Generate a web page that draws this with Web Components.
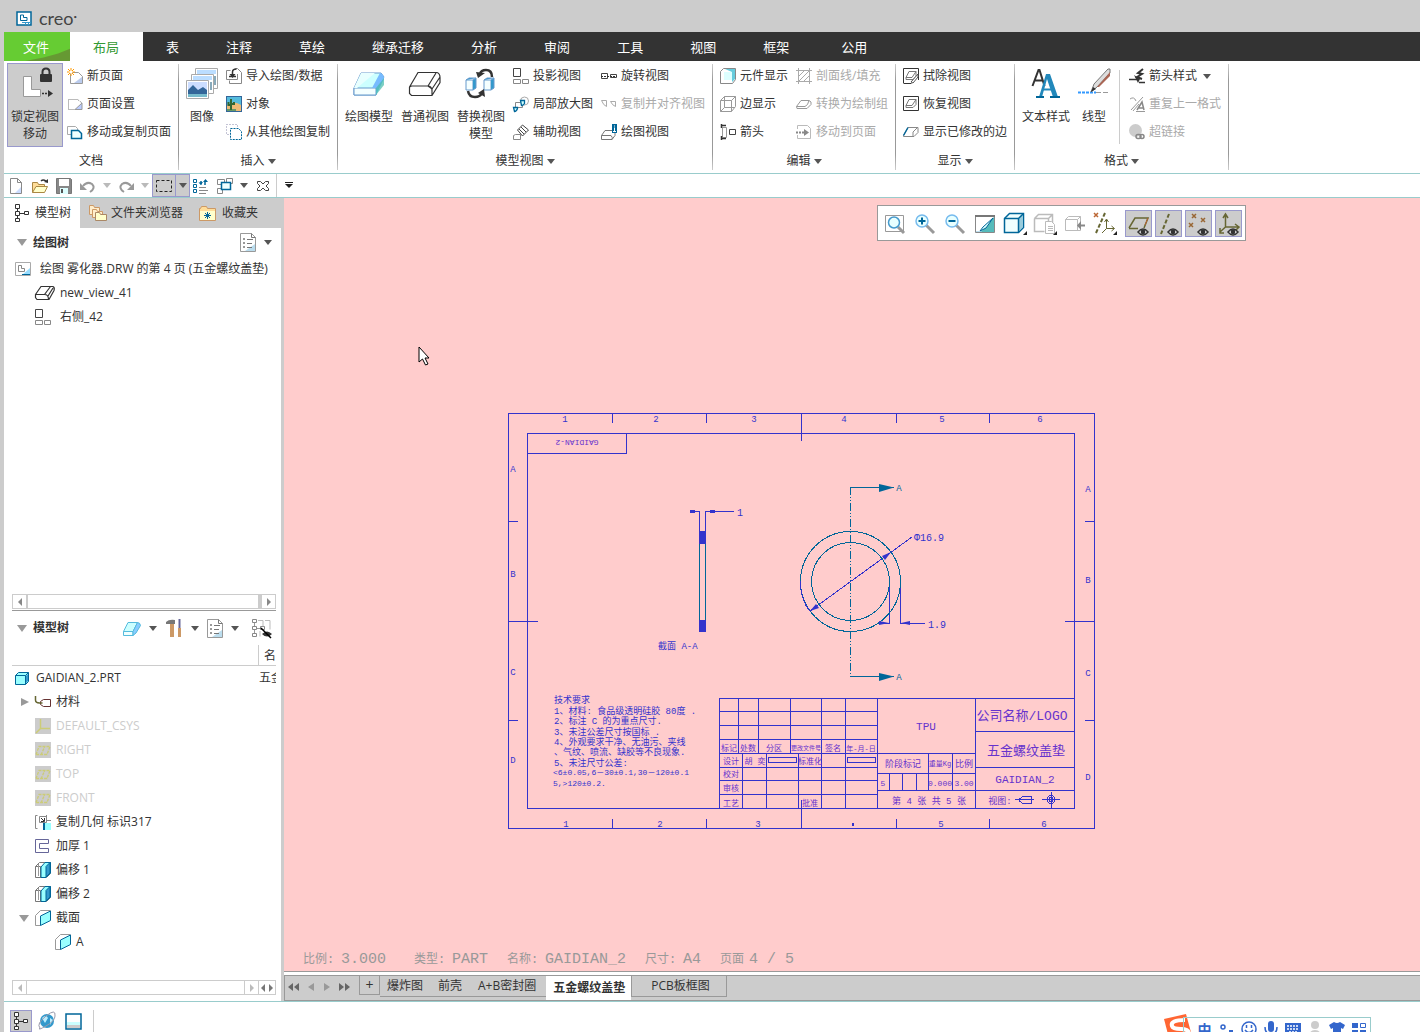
<!DOCTYPE html>
<html lang="zh-CN">
<head>
<meta charset="utf-8">
<title>creo</title>
<style>
  html, body { height: 100%; margin: 0; }
  body {
    background: #ccc;
    color: #333;
    font: 12px/16px "Open Sans", "Noto Sans CJK SC", sans-serif;
    overflow: hidden;
  }
</style>
</head>
<body>
<creo-app></creo-app>

<script>
const caret = '<path d="M0 0h8l-4 5z" fill="#555"/>';
const eye = '<path d="M10 20q5-6 10 0q-5 6-10 0z" fill="#fff" stroke="#333" stroke-width="1.5"/><circle cx="15" cy="20" r="2.4" fill="#333"/>';
const plane = '<path d="M0 0h16v16H0z" fill="#ccc"/><path d="M1 12.500L4 4.500h11l-3 8zM6 13l4-9" fill="none" stroke="#cc7" stroke-width="1.300" stroke-dasharray="3 1"/>';
const offset = '<path d="M.5 4.5l4-4h11v11l-4 4H.5zM.5 4.5h5v11" fill="#fff" stroke="#777"/><path d="M6 5l4-4.500h5.500V11L11 15.500H6z" fill="#9ff" stroke="#069"/><path d="M11 4.500l4-4V11l-4 4z" fill="#39c" stroke="#069"/><path d="M3.500 2v12" stroke="#999"/>';
const section = '<path d="M.5 5.500l5-5h10M.5 5.500v10h5" fill="none" stroke="#999"/><path d="M5.500 6L15.500 1v9.500l-10 5z" fill="#9ff" stroke="#069"/>';
const block = (a, b, c, s) => `<path d="M.5 11.500L5 2.500h9.500L10 11.500z" fill="${a}" stroke="${s}"/><path d="M.5 11.500v4H10v-4z" fill="${b}" stroke="${s}"/><path d="M10 11.500l4.500-9q2.500 0 3 3L13 13l-3 2.500z" fill="${c}" stroke="${s}"/>`;

// name: [width, height, markup]
const ICONS = {
  caret: [8, 5, caret],
  logo: [16, 15, '<path d="M1 1h14v13H1z" fill="#fff" stroke="#069" stroke-width="1.500"/><path d="M4.500 4v5.500h6.500v-3H7.500V4z" fill="none" stroke="#069"/><path d="M6 11.500h9M9.500 12v2m3-2v2" stroke="#39c"/>'],
  lock: [36, 32, '<path d="M6.500 8.500h8v13h9v7h-17z" fill="#fff" stroke="#999"/><rect x="23" y="6" width="12" height="8" rx="1" fill="#333"/><path d="M25.500 7V4q0-3.500 3.500-3.500T32.500 4v3" fill="none" stroke="#333" stroke-width="2"/><path d="M25 25.500h7" stroke="#333" stroke-width="1.500" stroke-dasharray="2 1"/><path d="M31 22l5 3.500-5 3.500z" fill="#333"/>'],
  pagenew: [16, 16, '<path d="M3.500 4.500h8l4 4v7h-12z" fill="#fff" stroke="#999"/><path d="M7 15l8-6v6z" fill="#bce"/><path d="M4 0v8M0 4h8M1 1l6 6M7 1L1 7" stroke="#f90"/><circle cx="4" cy="4" r="1.500" fill="#fff"/>'],
  pageset: [16, 16, '<path d="M1.500 3.500h9l4 3v7h-13z" fill="#fff" stroke="#777" stroke-dasharray="1 1"/><path d="M8 13.500h7V7z" fill="#bcf" stroke="#999"/>'],
  pagecopy: [16, 16, '<path d="M.5 2.500h8l2 2v6H.5z" fill="#fff" stroke="#aaa"/><path d="M4.500 6.500h7l3 3v5h-10z" fill="#eff" stroke="#069" stroke-width="1.500"/>'],
  images: [32, 32, '<g fill="#fff" stroke="#aaa"><path d="M9.500.5h22v20h-22z"/><path d="M5.500 6.500h22v19h-22z"/><path d="M.5 12.500h22v18H.5z"/></g><path d="M11 2h19v4H11zM7 8h19v4H7z" fill="#bdf"/><path d="M28 8h2v9h-2zM24 14h2v8h-2z" fill="#8ab"/><path d="M2 14h19v9H2z" fill="#cdf"/><path d="M2 22l5-5 5 5 5-3 4 3v5H2z" fill="#369"/><path d="M2 26h19v3H2z" fill="#7bc"/>'],
  import: [16, 16, '<path d="M.5 2.500h4m5-2h2l4 4v11h-12v-3M.5 2.500v9h11V6" fill="none" stroke="#888"/><path d="M3 8.500h7M6.500 9V4q0-3 4-3" fill="none" stroke="#333" stroke-width="1.500"/><path d="M3.500 6l3 4 3-4z" fill="#333"/>'],
  object: [16, 16, '<path d="M0 0h16v16H0z" fill="#369"/><path d="M1 1h14v8H1z" fill="#5bd"/><path d="M1 9q7-5 14 0v6H1z" fill="#eb7"/><path d="M1 13h9v2H1z" fill="#696"/><path d="M5 3v11M2.500 6v3H5m3-3v2H5" fill="none" stroke="#363" stroke-width="2"/>'],
  copyfrom: [16, 16, '<path d="M.5.5h11v10H.5z" fill="none" stroke="#88a" stroke-dasharray="1 2"/><path d="M4.500 4.500h8l3 3v8h-11z" fill="#fff" stroke="#069" stroke-dasharray="2 1"/>'],
  drawmodel: [34, 26, '<path d="M2 17L9 2h20l3 4-8 12v6H2z" fill="#cff" stroke="#69c"/><path d="M2 17h22v7H2z" fill="#f4ffff" stroke="#69c"/><path d="M9 2h14L5 17H2z" fill="#e8ffff"/><path d="M20 17L28 2q4 1 4 6l-8 16v-7z" fill="#7bf"/><path d="M24 17l8-10v7l-8 10z" fill="#4ba" opacity=".7"/>'],
  view: [34, 26, '<path d="M1.500 16L10 1.500h19q3 1 3 5v5L24 24.500H3.500l-2-2zM1.500 16l2-1H20l4 3 8-12M20 15L28 2m-4 16v6m-4-9q4 0 4 5" fill="#fff" stroke="#333" stroke-width="1.200"/>'],
  swap: [32, 32, '<path d="M1 12h7v10H1z" fill="#f5ffff" stroke="#69c"/><path d="M8 12l3-2v10l-3 2M1 12l3-2h7" fill="#39c" stroke="#69c"/><path d="M19 12h7v10h-7z" fill="#f5ffff" stroke="#69c"/><path d="M26 12l3-2v10l-3 2M19 12l3-2h7" fill="#39c" stroke="#69c"/><path d="M27 9q0-7-6-7-5 0-6 4M3 23q1 6 7 6 5 0 7-4" fill="none" stroke="#333" stroke-width="2.500"/><path d="M11 4l9 1-7 5zM20 29l-1-8-6 4z" fill="#333"/>'],
  project: [16, 16, '<path d="M.5.5h7v8h-7z" fill="#fff" stroke="#444"/><path d="M.5 11.500h7v4h-7zM9.500 11.500h6v4h-6z" fill="#fff" stroke="#888"/>'],
  detail: [16, 16, '<path d="M2.500 6.500h7v5h-7z" fill="#fff" stroke="#888"/><circle cx="11.500" cy="5" r="4" fill="none" stroke="#aaa"/><path d="M7.500 4.500h4v3q-1 2-3 2zM.5 11.500h4v1q-1 3-3 3z" fill="#cff" stroke="#069" stroke-width="1.300"/>'],
  aux: [16, 16, '<path d="M.5 11.500l2-1h5v5h-7z" fill="#fff" stroke="#888"/><path d="M4.500 6l5-5 6 5-6 6zM8 3l5 5M6 5l5 5" fill="#fff" stroke="#444"/>'],
  rotate: [16, 16, '<path d="M.5 5.500h6v5h-6zM9.500 6.500h6v3h-6z" fill="#fff" stroke="#444"/><path d="M0 8.500h16" stroke="#333" stroke-dasharray="2 1"/>'],
  align: [16, 16, '<path d="M.5 4.500h5v6q-3-1-5-6zM9.500 5.500h5v5q-3-1-5-5z" fill="none" stroke="#aaa"/>'],
  drawview: [16, 16, '<path d="M.5 11.500L4 6.500h10v5l-3 4H.5zM.5 11.500H10q2 2 1 4" fill="#fff" stroke="#777"/><path d="M11 0h5v9h-5z" fill="#069"/><path d="M13.500 1.500v1m0 1v4M12 7.500h3" stroke="#fff"/>'],
  comp: [16, 16, '<path d="M.5 3.500l3-3h12v11l-3 4H.5z" fill="#fff" stroke="#888"/><path d="M5 1h10v10l-3 3V4z" fill="#6cd"/><path d="M4 4h8v8H4z" fill="#dff"/>'],
  edge: [16, 16, '<path d="M.5 4.500l4-4h11v10l-4 5H.5zM11.500 15.500v-11H.5m11 0l4-4M4.500.5v11H15M4.500 11.500l-4 4" fill="none" stroke="#999"/>'],
  arrows: [16, 16, '<path d="M2.500 3.500h4v10h-4z" fill="#fff" stroke="#999"/><path d="M9.500 5.500h6v5h-6z" fill="#fff" stroke="#444"/><path d="M1 1.500h5M1 14.500h5M1.500 0v4m0 8v4" fill="none" stroke="#333" stroke-width="1.500"/>'],
  hatch: [16, 16, '<path d="M2.500 0v16m11-16v16M0 2.500h16m-16 11h16M3 8l5-5M3 13L13 3M8 13l5-5" fill="none" stroke="#aaa"/>'],
  group: [16, 16, '<path d="M.5 10.500L5 4.500h8q3 1 2 4l-4 4H1zM.5 10.500H9q3-1 4-6" fill="none" stroke="#999"/>'],
  moveto: [16, 16, '<path d="M1.500 5V1.500h10l3 3v10h-13V11" fill="none" stroke="#bbb"/><path d="M0 8.500h9" stroke="#888" stroke-width="2" stroke-dasharray="2 1"/><path d="M8 5l5 3.500L8 12z" fill="#888"/>'],
  erase: [16, 16, '<path d="M.5 15V.5h15V12M.5 15.500h8" fill="none" stroke="#333"/><path d="M3 9.500l3-6h7v5l-3 3H3zM3 9.500h6l4-6" fill="#fff" stroke="#777"/><path d="M8 14l7-8v3l-5 6z" fill="#fff" stroke="#555"/>'],
  restore: [16, 16, '<path d="M.5.5h15v14H.5z" fill="#fff" stroke="#333"/><path d="M3 9.500l3-6h7v5l-3 3H3zM3 9.500h6l4-6" fill="#fff" stroke="#777"/>'],
  modified: [16, 16, '<path d="M.5 11.500L5 3.500h10v5l-4 4H.5zM10 12V8l4-4" fill="#fff" stroke="#888"/><path d="M.5 11.500L5 3.500" stroke="#069" stroke-width="1.500"/>'],
  textstyle: [30, 32, '<path d="M1.500 18L7.500 2h1l5 16M4 12.500h8" fill="none" stroke="#333" stroke-width="2"/><path d="M15 6h4l8 23h-5l-6-18-5 18H8z" fill="#28b"/><path d="M11 21.500h10" stroke="#28b" stroke-width="2"/><path d="M5 29h8m6 0h10" stroke="#069" stroke-width="2"/>'],
  linestyle: [34, 32, '<path d="M1 24.500h18" stroke="#39f" stroke-width="2" stroke-dasharray="3 1"/><path d="M19 24.500h14" stroke="#999" stroke-dasharray="5 2"/><path d="M14 24l3-8L31 1h2v4L20 19z" fill="#ddd" stroke="#777"/><path d="M20 19L33 4v4L22 19z" fill="#a65"/><path d="M14 24l2-5 3 2z" fill="#333"/>'],
  arrowstyle: [16, 16, '<path d="M14 1L9 5l4 1-5 3 5 2" fill="none" stroke="#333" stroke-width="2"/><path d="M0 11.500h9M10 14.500h6" stroke="#333" stroke-width="1.500"/><path d="M5 7l6 4-2 4z" fill="#333"/>'],
  repeat: [16, 16, '<path d="M1 3q4-3 6 2M2 14L14 1M4 15L10 8M7 15.500h9" fill="none" stroke="#999"/><path d="M8 14l5-8 2 8M10 12h4" fill="none" stroke="#888" stroke-width="1.500"/>'],
  link: [16, 16, '<circle cx="6.500" cy="6.500" r="6.500" fill="#ccc"/><path d="M7 12.500q0-2 2-2h1q2 0 2 2t-2 2H9q-2 0-2-2zm4 0q0-2 2-2t2 2-2 2-2-2z" fill="none" stroke="#888" stroke-width="1.500"/>'],
  new: [14, 16, '<path d="M1.500.5h7l4 4v11h-11z" fill="#fff" stroke="#888"/><path d="M6 15l6-6v6z" fill="#cdf"/><path d="M8.500.5v4h4" fill="none" stroke="#888"/>'],
  open: [16, 16, '<path d="M.5 14.500v-10h5l1 2h6v3" fill="#fd9" stroke="#a84"/><path d="M.5 14.500L4 8.500h11.500l-3 6z" fill="#ffc" stroke="#a84"/><path d="M9 3q2-2 5 0" fill="none" stroke="#333" stroke-width="1.500"/><path d="M12 4l4-3v4z" fill="#333"/>'],
  save: [16, 16, '<path d="M.5.500h14l1 1v14H.5z" fill="#888" stroke="#777"/><path d="M3 1h10v7H3z" fill="#fff"/><path d="M4 10h8v6H4z" fill="#dff"/><path d="M5 11h2v4H5z" fill="#555"/>'],
  undo: [16, 14, '<path d="M3 7q4-5 9-2 4 4-2 8" fill="none" stroke="#999" stroke-width="2"/><path d="M0 4v7h7z" fill="#999"/>'],
  redo: [16, 14, '<path d="M13 7Q9 2 4 5q-4 4 2 8" fill="none" stroke="#999" stroke-width="2"/><path d="M16 4v7H9z" fill="#999"/>'],
  select: [16, 12, '<path d="M.5.500h15v11H.5z" fill="none" stroke="#222" stroke-dasharray="3 2"/>'],
  regen: [16, 16, '<path d="M.5 1.500h3v3h-3zM.5 6.500h3v3h-3zM.5 11.500h3v3h-3z" fill="#fff" stroke="#069"/><path d="M6 9.500h7m-7 3h9M6 15.500h7" stroke="#888"/><path d="M8 6.500V3m4 4V3" stroke="#069" stroke-width="1.500"/><path d="M5.500 4.500L8 7l2-3zM10 4l2.500-3L15 4z" fill="#069"/>'],
  windows: [16, 16, '<path d="M.5 1.500h7v5h-7zM9.500.5h6v5h-6zM.5 10.500h5v5h-5z" fill="#fff" stroke="#888"/><path d="M4.500 4.500h9v7h-9z" fill="#eff" stroke="#069" stroke-width="1.500"/>'],
  closewin: [14, 12, '<path d="M1.500 1.500h3L7 4l2.500-2.500h3v2L10 6l2.500 2.500v2h-3L7 8l-2.500 2.500h-3v-2L4 6 1.500 3.500z" fill="#fff" stroke="#444"/>'],
  more: [10, 7, '<path d="M1 0h8v1H1zM1 2h8l-4 4z" fill="#222"/>'],
  tree: [14, 18, '<path d="M.5.500h4v4h-4zM.5 7.500h4v4h-4zM.5 14.500h4v3h-4zM9.500 7.500h4v3h-4z" fill="#fff" stroke="#333"/><path d="M2.500 5v2m0 5v2M5 9.500h4" stroke="#333"/>'],
  folders: [20, 18, '<g fill="#fec" stroke="#c96"><path d="M1.500 10.500v-9h4l1 2h5v7z"/><path d="M4.500 13.500v-8h4l1 2h5v6z"/></g><path d="M7.500 16.500v-8h4l1 2h6v6z" fill="#ffc" stroke="#a86"/>'],
  fav: [18, 15, '<path d="M.5 14.500v-12h1l1-2h5l1 2h8v12z" fill="#fd9" stroke="#c96"/><path d="M1 5h15v9H1z" fill="#ffc"/><path d="M8.500 6v7M5 9.500h7M6 7l5 5m0-5l-5 5" stroke="#069"/>'],
  list: [16, 19, '<path d="M.5.500h11l4 4v14H.5z" fill="#fff" stroke="#999"/><path d="M5 18L15 11v7z" fill="#bde"/><path d="M11.500.5v4h4M7 6.500h6m-6 4h5m-5 4h5" fill="none" stroke="#777"/><path d="M3.500 5.500h1v1h-1zm0 4h1v1h-1zm0 4h1v1h-1z" fill="none" stroke="#777"/>'],
  drw: [16, 14, '<path d="M.5.500h15v13H.5z" fill="#fff" stroke="#aaa"/><path d="M7 13l8-7v7z" fill="#9df"/><path d="M3.500 3.500v6h6v-3h-3v-3z" fill="none" stroke="#888"/><path d="M7 12.500h8" stroke="#069"/>'],
  viewsm: [20, 16, '<path d="M.5 9.500L6 1.500h12q2 1 1 4l-5 9H2l-1.500-2zM.5 9.500h9q4 0 4 5M9.500 9.500l6-8M13 11l5-8" fill="#fff" stroke="#333" stroke-width="1.200"/>'],
  solid: [18, 16, block('#cff', '#efffff', '#8cf', '#5bd')],
  tools: [18, 18, '<path d="M1 3q3-3 9-2v4H1z" fill="#777"/><path d="M5 5h4v13H5z" fill="#c96"/><path d="M14.500 0v9" stroke="#669" stroke-width="2"/><path d="M13 9h3v9h-3z" fill="#c96"/>'],
  treehide: [20, 19, '<path d="M.5.500h4v3h-4zM.5 7.500h4v3h-4zM.5 14.500h4v3h-4zM8.500 7.500h4v3h-4z" fill="#fff" stroke="#888"/><path d="M2.500 4v3m0 4v3M5 9.500h3" stroke="#999"/><path d="M6 1.500h5v6m2-6h5v9M8 17.500V12" fill="none" stroke="#bbb"/><path d="M10 15q5-5 10 0-5 5-10 0z" fill="#333"/><path d="M9 9l10 10" stroke="#000" stroke-width="1.500"/>'],
  part: [14, 13, '<path d="M.5 3.500l3-3h10v9l-3 3H.5z" fill="#9ff" stroke="#069"/><path d="M10.500 3.500h-10m10 0v9m0-9l3-3" fill="none" stroke="#069"/><path d="M11 4l2-2v7l-2 2z" fill="#39c"/>'],
  material: [16, 12, '<path d="M5.500 5.500l3-2h7v7h-7l-3-2z" fill="#fff" stroke="#633"/><path d="M.5 0v4q0 3 4 3h3" fill="none" stroke="#663" stroke-width="1.500"/>'],
  csys: [16, 16, '<path d="M0 0h16v16H0z" fill="#ccc"/><path d="M5.500 1v9.500H15M5.500 10.500L1 15" fill="none" stroke="#cc7" stroke-width="1.500"/>'],
  plane: [16, 16, plane],
  copygeo: [16, 16, '<path d="M2.500 1.500H.5v13h2M4.500 2.500h7v6h-7z" fill="none" stroke="#888"/><path d="M8 9h8v7H8z" fill="#9ff"/><path d="M9 9v7" stroke="#069" stroke-width="2"/><path d="M6 4l3 3M9.500 4v3.500H6" fill="none" stroke="#333"/><path d="M11.500 1v5.500H16" fill="none" stroke="#888"/>'],
  thicken: [14, 14, '<path d="M13.500.5v4h-9v5h9v4H.5V.5z" fill="#fff" stroke="#669"/>'],
  offset: [16, 16, offset],
  section: [16, 16, section],
  zoomfit: [20, 20, '<path d="M.5 1.500h18v16H.5z" fill="#fff" stroke="#999"/><path d="M13 13l6 6" stroke="#999" stroke-width="3"/><circle cx="9" cy="8.500" r="5.500" fill="#e8ffff" stroke="#49c" stroke-width="1.500"/>'],
  zoomin: [20, 20, '<path d="M11 11l8 8" stroke="#999" stroke-width="3"/><circle cx="7" cy="7" r="6" fill="#e8ffff" stroke="#7be" stroke-width="1.500"/><path d="M7 3.500v7M3.500 7h7" stroke="#069" stroke-width="2"/>'],
  zoomout: [20, 20, '<path d="M11 11l8 8" stroke="#999" stroke-width="3"/><circle cx="7" cy="7" r="6" fill="#e8ffff" stroke="#7be" stroke-width="1.500"/><path d="M3.500 7h7" stroke="#069" stroke-width="2"/>'],
  repaint: [20, 20, '<path d="M.5 1.500h19v17H.5z" fill="#bde" stroke="#888"/><path d="M1 3h18L5 17H1z" fill="#fff"/><path d="M19 3v15H6z" fill="#5bb"/><path d="M18 4L8 13l-3 4 6-3z" fill="#dff" stroke="#069"/><path d="M0 2h20" stroke="#777" stroke-width="2"/>'],
  display: [24, 24, '<path d="M1.500 6.500l5-5h14v14l-5 5h-14z" fill="#f0ffff" stroke="#069" stroke-width="1.500"/><path d="M15 7l5-5v13l-5 5z" fill="#9cd"/><path d="M1.500 6.500h14v14m0-14l5-5" fill="none" stroke="#069" stroke-width="1.500"/><path d="M24 19v4h-4z" fill="#222"/>'],
  saved: [24, 24, '<path d="M1.500 6.500l4-4h14v9M1.500 6.500v13h10M1.500 6.500h14v4m0-4l4-4" fill="none" stroke="#bbb" stroke-width="1.500"/><path d="M12.500 9.500h6l3 3v9h-9z" fill="#fff" stroke="#bbb"/><path d="M15 14.500h5m-5 2h5m-5 2h5" stroke="#bbb"/><path d="M24 19v4h-4z" fill="#222"/>'],
  persp: [22, 20, '<path d="M1.500 5.500l3-3h12v14h-15zM1.500 5.500h12v11m0-11l3-3" fill="#fff" stroke="#bbb"/><path d="M15 11.500h6" stroke="#888" stroke-width="2"/><path d="M17 7v9l-4-4.500z" fill="#888"/>'],
  datum: [24, 24, '<path d="M1 1l4 4m0-4L1 5" stroke="#b63" stroke-width="1.500"/><path d="M12 1L3 21" stroke="#663" stroke-width="2" stroke-dasharray="4 2"/><path d="M13.500 8v8.500H21M13.500 16.500L9 21M11.500 10l2-3 2 3m3 4l3 2.500-3 2.500" fill="none" stroke="#663"/><path d="M24 19v4h-4z" fill="#222"/>'],
  dplane: [22, 24, '<path d="M1 16L7 6h13l-4 10" fill="none" stroke="#663" stroke-width="1.500"/><path d="M1 16.500h9" stroke="#663" stroke-width="1.500"/><path d="M20 6l-3 7" stroke="#b63"/>' + eye],
  daxis: [22, 24, '<path d="M11 2L3 22" stroke="#663" stroke-width="2" stroke-dasharray="4 2"/>' + eye],
  dpoint: [22, 24, '<path d="M4 2l4 4m0-4L4 6m9 0l4 4m0-4l-4 4M1 11l4 4m0-4l-4 4" stroke="#963" stroke-width="1.500"/>' + eye],
  dcsys: [22, 24, '<path d="M7.500 3v12H20M7.500 15L2 20M5 6l2.500-4L10 6m7 6l4 3-3 3M2 16v5h4" fill="none" stroke="#663" stroke-width="1.500"/>' + eye],
  globe: [18, 18, '<circle cx="9" cy="9" r="7" fill="#39c"/><path d="M4 6q4-4 6 0l-3 5zM12 6l3 2-3 5z" fill="#bef"/><path d="M2 16Q-2 12 8 4t9 0q0 5-9 10t-6 2z" fill="none" stroke="#99a"/>'],
  panel: [17, 17, '<path d="M1 1h15v15H1z" fill="#fff" stroke="#069" stroke-width="1.500"/><path d="M2 9h13v3H2z" fill="#cff"/><path d="M2 12h13v3H2z" fill="#ccc"/>'],
  cursor: [12, 20, '<path d="M1 1v15l3.500-3 3 6 2.500-1-3-6H11z" fill="#fff" stroke="#000"/>'],
  sogou: [28, 26, '<path d="M0 5L22 0l6 22-22 6z" fill="#f63"/><path d="M21 6Q6 6 8 12q1 3 9 3t8 5q-2 4-16 5" fill="none" stroke="#fff" stroke-width="4"/>'],
  dots: [14, 14, '<circle cx="3" cy="5" r="2" fill="none" stroke="#36c" stroke-width="1.500"/><path d="M9 8h4v3l-3 3v-3H9z" fill="#36c"/>'],
  smile: [16, 16, '<circle cx="8" cy="8" r="7" fill="#fff" stroke="#36c" stroke-width="1.500"/><path d="M5.500 4v3m5-3v3M4 9q4 5 8 0" fill="none" stroke="#36c" stroke-width="1.500"/>'],
  mic: [14, 16, '<rect x="4" y="0" width="6" height="11" rx="3" fill="#36c"/><path d="M1 6q0 7 6 7t6-7M7 13v3" fill="none" stroke="#36c" stroke-width="1.500"/>'],
  keyboard: [16, 14, '<path d="M0 1h16v12H0z" fill="#36c"/><path d="M2 4h12M2 7h12M4 10h8" stroke="#fff" stroke-width="1.500" stroke-dasharray="2 1"/>'],
  person: [14, 16, '<circle cx="7" cy="4" r="4" fill="#ccc"/><path d="M1 16q0-7 6-7t6 7z" fill="#ccc"/>'],
  shirt: [16, 14, '<path d="M0 3l5-3q3 2 6 0l5 3-2 4-2-1v8H4V6L2 7z" fill="#36c"/>'],
  apps: [14, 14, '<path d="M0 1h6v5H0zM0 8h6v5H0zM8 8h6v5H8z" fill="#36c"/><path d="M8.500 1.500h5v4h-5z" fill="#fff" stroke="#36c"/>']
};

class CreoIcon extends HTMLElement {
  connectedCallback() {
    const [w, h, markup] = ICONS[this.getAttribute('name')];
    this.attachShadow({ mode: 'open' }).innerHTML = `
      <style>
        :host { display: inline-flex; flex: none; }
        svg { display: block; overflow: visible; }
      </style>
      <svg width="${w}" height="${h}" viewBox="0 0 ${w} ${h}" aria-hidden="true">${markup}</svg>`;
  }
}
customElements.define('creo-icon', CreoIcon);

class CreoTitle extends HTMLElement {
  connectedCallback() {
    this.attachShadow({ mode: 'open' }).innerHTML = `
      <style>
        :host { display: flex; align-items: center; gap: 7px; height: 32px; padding: 4px 0 0 12px; box-sizing: border-box; }
        span { font: 18px/20px Lato, sans-serif; color: #444; }
        sup { font-size: 6px; line-height: 0; vertical-align: 6px; }
      </style>
      <creo-icon name="logo"></creo-icon><span>creo<sup>•</sup></span>`;
  }
}
customElements.define('creo-title', CreoTitle);

class RibbonTabs extends HTMLElement {
  connectedCallback() {
    const tabs = ['表', '注释', '草绘', '继承迁移', '分析', '审阅', '工具', '视图', '框架'];
    this.attachShadow({ mode: 'open' }).innerHTML = `
      <style>
        :host { display: block; background: #333; }
        nav { display: flex; }
        button { border: 0; background: none; color: #fff; font: inherit; font-size: 13px; line-height: 28px; padding: 1px 24px 0 23px; height: 29px; white-space: nowrap; }
        .file { position: relative; background: #6c3; padding: 1px 21px 0 19px; }
        .file::before { content: ""; position: absolute; inset: 0; background: #693; clip-path: polygon(32% 100%, 60% 88%, 82% 74%, 100% 58%, 100% 100%); }
        .file span { position: relative; }
        .active { background: #fff; color: #393; }
        .last { margin-left: 5px; }
      </style>
      <nav role="tablist">
        <button class="file"><span>文件</span></button>
        <button class="active" role="tab" aria-selected="true">布局</button>
        ${tabs.map(t => `<button role="tab">${t}</button>`).join('')}
        <button class="last" role="tab">公用</button>
      </nav>`;
  }
}
customElements.define('ribbon-tabs', RibbonTabs);

class RibbonButton extends HTMLElement {
  connectedCallback() {
    const extra = this.hasAttribute('caret') ? '<creo-icon class="caret" name="caret"></creo-icon>' : '';
    this.attachShadow({ mode: 'open' }).innerHTML = `
      <style>
        :host { display: block; }
        button { display: flex; align-items: center; gap: 4px; height: 28px; padding: 0 4px; border: 0; background: none; color: inherit; font: inherit; white-space: nowrap; box-sizing: border-box; }
        button:disabled { color: #aaa; }
        .box { display: flex; align-items: center; justify-content: center; width: 16px; flex: none; }
        .caret { margin-left: 2px; }
        :host([big]) { margin-top: 1px; }
        :host([big]) button { flex-direction: column; gap: 8px; height: 84px; padding: 4px 3px 0; border: 1px solid transparent; white-space: normal; }
        :host([big]) .box { width: 32px; height: 32px; }
        :host([big]) .text { max-width: 48px; line-height: 17px; }
        :host([pressed]) button { background: #ccc; border-color: #99c; }
      </style>
      <button ${this.hasAttribute('off') ? 'disabled' : ''}>
        <span class="box"><creo-icon name="${this.getAttribute('icon')}"></creo-icon></span>
        <span class="text"><slot></slot></span>${extra}
      </button>`;
  }
}
customElements.define('ribbon-button', RibbonButton);

class RibbonGroup extends HTMLElement {
  connectedCallback() {
    const drop = this.hasAttribute('drop') ? '<creo-icon name="caret"></creo-icon>' : '';
    this.attachShadow({ mode: 'open' }).innerHTML = `
      <style>
        :host { display: flex; flex-direction: column; flex: none; padding: 1px 4px 0 3px; background: linear-gradient(#ccc, #999 15%, #999 85%, #ccc) right center / 1px 106px no-repeat; }
        .body { display: flex; height: 86px; }
        .label { display: flex; align-items: center; justify-content: center; gap: 3px; height: 25px; border: 0; background: none; font: inherit; color: inherit; padding: 1px 0 0; }
        ::slotted(.rule) { width: 1px; height: 74px; margin: 8px 5px 0; background: #ccc; }
      </style>
      <div class="body"><slot></slot></div>
      <button class="label">${this.getAttribute('label')}${drop}</button>`;
  }
}
customElements.define('ribbon-group', RibbonGroup);

class RibbonBar extends HTMLElement {
  connectedCallback() {
    this.attachShadow({ mode: 'open' }).innerHTML = `
      <style>
        :host { display: flex; background: #fff; border-bottom: 1px solid #9cc; overflow: hidden; }
      </style>
      <ribbon-group label="文档">
        <ribbon-button big pressed icon="lock">锁定视图移动</ribbon-button>
        <div>
          <ribbon-button icon="pagenew">新页面</ribbon-button>
          <ribbon-button icon="pageset">页面设置</ribbon-button>
          <ribbon-button icon="pagecopy">移动或复制页面</ribbon-button>
        </div>
      </ribbon-group>
      <ribbon-group label="插入" drop>
        <ribbon-button big icon="images">图像</ribbon-button>
        <div>
          <ribbon-button icon="import">导入绘图/数据</ribbon-button>
          <ribbon-button icon="object">对象</ribbon-button>
          <ribbon-button icon="copyfrom">从其他绘图复制</ribbon-button>
        </div>
      </ribbon-group>
      <ribbon-group label="模型视图" drop>
        <ribbon-button big icon="drawmodel">绘图模型</ribbon-button>
        <ribbon-button big icon="view">普通视图</ribbon-button>
        <ribbon-button big icon="swap">替换视图模型</ribbon-button>
        <div>
          <ribbon-button icon="project">投影视图</ribbon-button>
          <ribbon-button icon="detail">局部放大图</ribbon-button>
          <ribbon-button icon="aux">辅助视图</ribbon-button>
        </div>
        <div>
          <ribbon-button icon="rotate">旋转视图</ribbon-button>
          <ribbon-button off icon="align">复制并对齐视图</ribbon-button>
          <ribbon-button icon="drawview">绘图视图</ribbon-button>
        </div>
      </ribbon-group>
      <ribbon-group label="编辑" drop>
        <div>
          <ribbon-button icon="comp">元件显示</ribbon-button>
          <ribbon-button icon="edge">边显示</ribbon-button>
          <ribbon-button icon="arrows">箭头</ribbon-button>
        </div>
        <div>
          <ribbon-button off icon="hatch">剖面线/填充</ribbon-button>
          <ribbon-button off icon="group">转换为绘制组</ribbon-button>
          <ribbon-button off icon="moveto">移动到页面</ribbon-button>
        </div>
      </ribbon-group>
      <ribbon-group label="显示" drop>
        <div>
          <ribbon-button icon="erase">拭除视图</ribbon-button>
          <ribbon-button icon="restore">恢复视图</ribbon-button>
          <ribbon-button icon="modified">显示已修改的边</ribbon-button>
        </div>
      </ribbon-group>
      <ribbon-group label="格式" drop>
        <ribbon-button big icon="textstyle">文本样式</ribbon-button>
        <ribbon-button big icon="linestyle">线型</ribbon-button>
        <div class="rule"></div>
        <div>
          <ribbon-button caret icon="arrowstyle">箭头样式</ribbon-button>
          <ribbon-button off icon="repeat">重复上一格式</ribbon-button>
          <ribbon-button off icon="link">超链接</ribbon-button>
        </div>
      </ribbon-group>`;
  }
}
customElements.define('ribbon-bar', RibbonBar);

class QuickBar extends HTMLElement {
  connectedCallback() {
    this.attachShadow({ mode: 'open' }).innerHTML = `
      <style>
        :host { display: flex; align-items: center; height: 23px; background: #fff; border-bottom: 1px solid #9cc; }
        button { display: flex; align-items: center; justify-content: center; width: 24px; height: 23px; flex: none; padding: 0; border: 0; background: none; }
        .drop { width: 14px; }
        .dim { opacity: .4; }
        .split { display: flex; background: #ccc; border: 1px solid #99c; box-sizing: border-box; height: 23px; }
        .split button { height: 21px; width: 22px; }
        .split .drop { width: 14px; border-left: 1px solid #99c; }
        .split + button { width: 22px; }
        .wide { width: 26px; }
        .wide + .drop { width: 12px; }
        hr { width: 1px; height: 23px; margin: 0; border: 0; background: #ccc; }
      </style>
      <button aria-label="新建"><creo-icon name="new"></creo-icon></button>
      <button aria-label="打开"><creo-icon name="open"></creo-icon></button>
      <button aria-label="保存"><creo-icon name="save"></creo-icon></button>
      <button aria-label="撤消"><creo-icon name="undo"></creo-icon></button>
      <button class="drop dim" aria-label="撤消列表"><creo-icon name="caret"></creo-icon></button>
      <button aria-label="重做"><creo-icon name="redo"></creo-icon></button>
      <button class="drop dim" aria-label="重做列表"><creo-icon name="caret"></creo-icon></button>
      <span class="split">
        <button aria-label="选择"><creo-icon name="select"></creo-icon></button>
        <button class="drop" aria-label="选择列表"><creo-icon name="caret"></creo-icon></button>
      </span>
      <button aria-label="重新生成"><creo-icon name="regen"></creo-icon></button>
      <button class="wide" aria-label="窗口"><creo-icon name="windows"></creo-icon></button>
      <button class="drop" aria-label="窗口列表"><creo-icon name="caret"></creo-icon></button>
      <button class="wide" aria-label="关闭"><creo-icon name="closewin"></creo-icon></button>
      <hr>
      <button aria-label="自定义"><creo-icon name="more"></creo-icon></button>`;
  }
}
customElements.define('quick-bar', QuickBar);

class TreeItem extends HTMLElement {
  connectedCallback() {
    const toggle = this.getAttribute('toggle');
    this.attachShadow({ mode: 'open' }).innerHTML = `
      <style>
        :host { display: flex; align-items: center; height: 24px; white-space: nowrap; }
        :host([level="1"]) { padding-left: 20px; }
        :host([level="2"]) { padding-left: 40px; }
        :host([hid]) { color: #ccc; }
        .box { position: relative; display: flex; align-items: center; width: 16px; }
        .name { margin-left: 5px; }
        :host([wide]) .name { margin-left: 9px; }
        i { position: absolute; left: -15px; border: 4px solid transparent; }
        .open { border: 5px solid transparent; border-top: 7px solid #999; border-bottom: 0; left: -16px; }
        .shut { border-left: 8px solid #999; border-right: 0; left: -14px; }
      </style>
      <span class="box">${toggle ? `<i class="${toggle}"></i>` : ''}<creo-icon name="${this.getAttribute('icon')}"></creo-icon></span>
      <span class="name"><slot></slot></span>`;
  }
}
customElements.define('tree-item', TreeItem);

class ScrollTrack extends HTMLElement {
  connectedCallback() {
    this.attachShadow({ mode: 'open' }).innerHTML = `
      <style>
        :host { display: flex; height: 15px; box-sizing: border-box; border: 1px solid #ccc; background: #fff; flex: none; }
        span { flex: 1; border: solid #ccc; border-width: 0 4px 0 2px; }
        :host([thin]) span { border-width: 0 1px; }
        svg { display: block; width: 13px; height: 13px; fill: #888; }
        :host([thin]) svg { fill: #bbb; }
        :host([thin]) .both { width: 16px; fill: #777; border-left: 1px solid #ccc; }
      </style>
      <svg viewBox="0 0 13 13"><path d="M9 3v8L5 7z"/></svg><span></span>
      <svg viewBox="0 0 13 13"><path d="M5 3v8l4-4z"/></svg>
      ${this.hasAttribute('thin') ? '<svg class="both" viewBox="0 0 16 13"><path d="M6 3v8L2 7zM10 3v8l4-4z"/></svg>' : ''}`;
  }
}
customElements.define('scroll-track', ScrollTrack);

class SidePanel extends HTMLElement {
  connectedCallback() {
    this.attachShadow({ mode: 'open' }).innerHTML = `
      <style>
        :host { display: flex; flex-direction: column; width: 277px; flex: none; margin-right: 3px; background: #fff; }
        button { display: flex; align-items: center; border: 0; background: none; padding: 0; font: inherit; color: inherit; white-space: nowrap; }
        .tabs { display: flex; height: 30px; background: #ccc; margin-right: -3px; flex: none; }
        .tabs button { gap: 3px; padding: 0 8px; }
        .tabs .active { background: #fff; padding: 0 9px 0 11px; gap: 6px; }
        .tabs .fav { gap: 5px; }
        section { display: flex; flex-direction: column; flex: 382 1 0; min-height: 0; padding: 0 5px 0 8px; }
        .model { flex: 391 1 0; }
        header { display: flex; align-items: center; height: 29px; flex: none; }
        .model header { height: 34px; border-top: 1px solid #999; }
        h2 { font: inherit; font-weight: bold; margin: 0 auto 0 6px; }
        i { border: 5px solid transparent; border-top: 7px solid #999; border-bottom: 0; margin-left: 5px; }
        .tools { display: flex; align-items: center; gap: 8px; padding-right: 4px; }
        .tools .end { margin-left: 5px; }
        .tree { flex: 1; min-height: 0; overflow: hidden; padding-left: 3px; }
        .cols { display: flex; justify-content: flex-end; height: 20px; border-bottom: 1px solid #ccc; flex: none; }
        .cols span { width: 12px; padding-left: 5px; border-left: 1px solid #ccc; line-height: 22px; white-space: nowrap; }
        .root { display: flex; justify-content: space-between; }
        .root span { width: 17px; overflow: hidden; white-space: nowrap; line-height: 24px; }
        .space { height: 6px; flex: none; }
        .draw .space { height: 1px; }
      </style>
      <div class="tabs" role="tablist">
        <button class="active" role="tab"><creo-icon name="tree"></creo-icon>模型树</button>
        <button role="tab"><creo-icon name="folders"></creo-icon><span>文件夹浏览器</span></button>
        <button class="fav" role="tab"><creo-icon name="fav"></creo-icon><span>收藏夹</span></button>
      </div>
      <section class="draw">
        <header><i></i><h2>绘图树</h2>
          <div class="tools">
            <button aria-label="设置"><creo-icon name="list"></creo-icon></button>
            <button aria-label="设置列表"><creo-icon name="caret"></creo-icon></button>
          </div>
        </header>
        <div class="tree">
          <tree-item wide icon="drw">绘图 雾化器.DRW 的第 4 页 (五金螺纹盖垫)</tree-item>
          <tree-item wide level="1" icon="viewsm">new_view_41</tree-item>
          <tree-item wide level="1" icon="project">右侧_42</tree-item>
        </div>
        <scroll-track></scroll-track>
        <div class="space"></div>
      </section>
      <section class="model">
        <header><i></i><h2>模型树</h2>
          <div class="tools">
            <button aria-label="显示"><creo-icon name="solid"></creo-icon></button>
            <button aria-label="显示列表"><creo-icon name="caret"></creo-icon></button>
            <button aria-label="工具"><creo-icon name="tools"></creo-icon></button>
            <button aria-label="工具列表"><creo-icon name="caret"></creo-icon></button>
            <button aria-label="设置"><creo-icon name="list"></creo-icon></button>
            <button aria-label="设置列表"><creo-icon name="caret"></creo-icon></button>
            <button class="end" aria-label="隐藏"><creo-icon name="treehide"></creo-icon></button>
          </div>
        </header>
        <div class="cols"><span>名</span></div>
        <div class="tree">
          <div class="root"><tree-item icon="part">GAIDIAN_2.PRT</tree-item><span>五金</span></div>
          <tree-item level="1" toggle="shut" icon="material">材料</tree-item>
          <tree-item level="1" hid icon="csys">DEFAULT_CSYS</tree-item>
          <tree-item level="1" hid icon="plane">RIGHT</tree-item>
          <tree-item level="1" hid icon="plane">TOP</tree-item>
          <tree-item level="1" hid icon="plane">FRONT</tree-item>
          <tree-item level="1" icon="copygeo">复制几何 标识317</tree-item>
          <tree-item level="1" icon="thicken">加厚 1</tree-item>
          <tree-item level="1" icon="offset">偏移 1</tree-item>
          <tree-item level="1" icon="offset">偏移 2</tree-item>
          <tree-item level="1" toggle="open" icon="section">截面</tree-item>
          <tree-item level="2" icon="section">A</tree-item>
        </div>
        <scroll-track thin></scroll-track>
        <div class="space"></div>
      </section>`;
  }
}
customElements.define('side-panel', SidePanel);

class ViewToolbar extends HTMLElement {
  connectedCallback() {
    const plain = { zoomfit: '重新调整', zoomin: '放大', zoomout: '缩小', repaint: '重画', display: '显示样式', saved: '已保存方向', persp: '视图管理器', datum: '基准显示过滤器' };
    const toggles = { dplane: '平面显示', daxis: '轴显示', dpoint: '点显示', dcsys: '坐标系显示' };
    this.attachShadow({ mode: 'open' }).innerHTML = `
      <style>
        :host { display: flex; gap: 3px; padding: 4px 3px 3px 3px; background: #fff; border: 1px solid #999; }
        button { display: flex; align-items: center; justify-content: center; width: 27px; height: 27px; padding: 0; border: 0; background: none; }
        .on { background: #ccc; border: 1px solid #99c; }
        hr { width: 1px; margin: 0; border: 0; }
      </style>
      ${Object.keys(plain).map(n => `<button aria-label="${plain[n]}"><creo-icon name="${n}"></creo-icon></button>`).join('')}
      <hr>
      ${Object.keys(toggles).map(n => `<button class="on" aria-pressed="true" aria-label="${toggles[n]}"><creo-icon name="${n}"></creo-icon></button>`).join('')}`;
  }
}
customElements.define('view-toolbar', ViewToolbar);

class DrawingSheet extends HTMLElement {
  connectedCallback() {
    const text = (x, y, size, str, cls = '') => `<text x="${x}" y="${y}" font-size="${size}" class="${cls}">${str}</text>`;
    const notes = [
      '技术要求', '1、材料: 食品级透明硅胶 80度 .', '2、标注 C 的为重点尺寸.', '3、未注公差尺寸按国标 .',
      '4、外观要求干净、无油污、夹线', '、气纹、喷流、缺胶等不良现象.', '5、未注尺寸公差:'
    ];
    this.attachShadow({ mode: 'open' }).innerHTML = `
      <style>
        :host { display: block; }
        svg { display: block; width: 100%; height: 100%; font-family: "Liberation Mono", "Noto Sans CJK SC", monospace; }
        .line { fill: none; stroke: #33c; shape-rendering: crispEdges; }
        .geo { fill: none; stroke: #069; shape-rendering: crispEdges; }
        text { fill: #33c; }
        .m { text-anchor: middle; }
        .c { text-anchor: middle; fill: #63c; }
        .g { text-anchor: middle; fill: #069; }
      </style>
      <svg viewBox="284 198 1136 773">
        <g class="line">
          <path d="M508.500 413.500h586v415h-586zM527.500 433.500h547v375h-547z"/>
          <path d="M527 453.500h99.500V433"/>
          <path d="M612.500 413v10m94-10v10m95-10v28m95-28v10m93-10v10M612.500 819v9m94-9v9m95-28v28m95-9v9m93-9v9"/>
          <path d="M508 521.500h10m-10 100h30m-30 99h10M1085 521.500h9m-29 100h29m-9 99h9"/>
          <!-- title block -->
          <path d="M719.500 808V698.500H1074M719 711.500h158m-158 14h158m-158 14h158m-158 14h256m-256 14h158m-158 13h158m-158 14h158"/>
          <path d="M738.500 698v55m20-55v55m32-55v55m31-55v110m24-110v110m32-110v110m98-110v110M742.500 753v55m24-55v55m32-55v55"/>
          <path d="M768.500 757.500h28v5h-28zM847.500 757.500h28v5h-28z"/>
          <path d="M877 773.500h98m-98 17h197M928.500 753v37m24-37v37M889.500 773v17m13-17v17m14-17v17M975 731.500h99m-99 36h99"/>
          <!-- dimensions -->
          <path d="M690 511.500h9.500v20M734 511.500h-28.500v20"/>
          <path d="M810 611L912 537M889.500 582v41.500H879M900.500 582v41.500h24.500"/>
          <path d="M1015 799.500h19m-15 0l4-3h8v7h-8l-4-3M1042 799.500h18m-9-8v16"/><circle cx="1051" cy="799.500" r="4"/><circle cx="1051" cy="799.500" r="2"/>
        </g>
        <g class="geo">
          <path d="M699.500 531v100M705.500 531v100M699 543.500h7"/>
          <circle cx="850.500" cy="581.500" r="50"/><circle cx="850.500" cy="581.500" r="39"/>
          <path d="M850.500 487v190" stroke-dasharray="8 2 1 2 1 2"/><path d="M851 487.500h43M851 676.500h43"/>
        </g>
        <path class="line" d="M800.500 581v5q1 14 9 25"/>
        <path d="M699 531h7v13h-7zM699 620h7v12h-7zM690 510h5v3h-5zM710 510h5v3h-5zM810 611l6-7 3 4zM891 552l-9 4 3 4zM889 623l-10-2v4zM901 623l9-2v4z" fill="#33c"/>
        <path d="M879 484v8l15-4.500zM879 673v8l15-4.500z" fill="#069"/>

        ${[565, 656, 754, 844, 942, 1040].map((x, i) => text(x, 422, 9, i + 1, 'm')).join('')}
        ${[566, 660, 758, 0, 941, 1044].map((x, i) => x ? text(x, 827, 9, i + 1, 'm') : '').join('')}
        <path d="M852 823h2v3h-2z" fill="#33c"/>
        ${[472, 577, 675, 763].map((y, i) => text(513, y, 9, 'ABCD'[i], 'm')).join('')}
        ${[492, 583, 676, 780].map((y, i) => text(1088, y, 9, 'ABCD'[i], 'm')).join('')}
        <text transform="rotate(180 577 443)" x="577" y="446" font-size="8" class="c">GAIDIAN-2</text>
        ${text(740, 516, 10, '1', 'm')}${text(658, 649, 9, '截面 A-A')}
        ${text(914, 541, 10, 'Φ16.9')}${text(928, 628, 10, '1.9')}
        ${text(899, 491, 9, 'A', 'g')}${text(899, 680, 9, 'A', 'g')}
        ${notes.map((s, i) => text(554, [703, 714, 724, 735, 745, 755, 766][i], 9, s)).join('')}
        ${text(553, 775, 8, '&lt;6±0.05,6－30±0.1,30－120±0.1')}${text(553, 786, 8, '5,&gt;120±0.2.')}
        ${text(729, 751, 8, '标记', 'c')}${text(748, 751, 8, '处数', 'c')}${text(774, 751, 8, '分区', 'c')}
        ${text(806, 750, 6, '更改文件号', 'c')}${text(833, 751, 8, '签名', 'c')}${text(861, 751, 7, '年-月-日', 'c')}
        ${text(731, 764, 8, '设计', 'c')}${text(755, 764, 8, '胡 奕', 'c')}${text(810, 764, 8, '标准化', 'c')}
        ${text(731, 777, 8, '校对', 'c')}${text(731, 791, 8, '审核', 'c')}${text(731, 806, 8, '工艺', 'c')}${text(810, 806, 8, '批准', 'c')}
        ${text(926, 730, 11, 'TPU', 'c')}
        ${text(903, 767, 9, '阶段标记', 'c')}${text(940, 766, 7, '重量Kg', 'c')}${text(964, 767, 9, '比例', 'c')}
        ${text(883, 786, 8, '5', 'c')}${text(940, 786, 8, '0.000', 'c')}${text(964, 786, 8, '3.00', 'c')}
        ${text(929, 804, 9, '第 4 张 共 5 张', 'c')}
        ${text(1022, 720, 13, '公司名称/LOGO', 'c')}${text(1026, 755, 13, '五金螺纹盖垫', 'c')}${text(1025, 783, 11, 'GAIDIAN_2', 'c')}
        ${text(1000, 804, 9, '视图:', 'c')}
      </svg>`;
  }
}
customElements.define('drawing-sheet', DrawingSheet);

class DrawingCanvas extends HTMLElement {
  connectedCallback() {
    this.attachShadow({ mode: 'open' }).innerHTML = `
      <style>
        :host { position: relative; display: flex; flex-direction: column; justify-content: flex-end; flex: 1; min-height: 0; background: #fcc; overflow: hidden; }
        drawing-sheet { position: absolute; inset: 0; }
        view-toolbar { position: absolute; top: 7px; left: 593px; }
        .pointer { position: absolute; left: 134px; top: 148px; }
        dl { display: flex; align-items: center; height: 22px; margin: 0 0 0 19px; color: #999; }
        dt { white-space: nowrap; width: 38px; font-family: "Liberation Mono", "Noto Sans CJK SC", monospace; }
        dd { margin: 0 19px 0 0; font: 15px/20px "Liberation Mono", monospace; white-space: nowrap; }
        .scale { margin-right: 28px; }
        .last { width: 29px; }
      </style>
      <drawing-sheet></drawing-sheet>
      <view-toolbar></view-toolbar>
      <creo-icon class="pointer" name="cursor"></creo-icon>
      <dl>
        <dt>比例:</dt><dd class="scale">3.000</dd>
        <dt>类型:</dt><dd>PART</dd>
        <dt>名称:</dt><dd>GAIDIAN_2</dd>
        <dt>尺寸:</dt><dd>A4</dd>
        <dt class="last">页面</dt><dd>4 / 5</dd>
      </dl>`;
  }
}
customElements.define('drawing-canvas', DrawingCanvas);

class SheetTabs extends HTMLElement {
  connectedCallback() {
    this.attachShadow({ mode: 'open' }).innerHTML = `
      <style>
        :host { display: block; border-top: 1px solid #999; padding-top: 3px; background: #fff; flex: none; }
        nav { display: flex; align-items: flex-start; height: 24px; background: #ccc; border: solid #999; border-width: 1px 0 1px 1px; }
        button { height: 21px; padding: 0 8px 0 7px; border: 0; border-bottom: 1px solid #999; background: none; font: inherit; color: inherit; line-height: 20px; white-space: nowrap; }
        .nav { width: 17px; padding: 0; border: 0; }
        .nav svg { display: block; margin: 0 auto; fill: #666; }
        .dim svg { fill: #999; }
        .add { width: 21px; padding: 0; margin-left: 6px; border: 1px solid #999; border-top: 0; height: 19px; line-height: 18px; font-size: 14px; }
        .wide { padding: 0 10px 0 8px; }
        .active { background: #fff; height: 24px; border: 0; font-weight: bold; padding: 0 6px 0 7px; }
        .last { padding: 0 16px 0 19px; border-right: 1px solid #999; border-left: 1px solid #999; }
      </style>
      <nav>
        <button class="nav" aria-label="第一页"><svg width="11" height="8"><path d="M5 0v8L0 4zM11 0v8L6 4z"/></svg></button>
        <button class="nav dim" aria-label="上一页"><svg width="7" height="8"><path d="M7 0v8L1 4z"/></svg></button>
        <button class="nav dim" aria-label="下一页"><svg width="7" height="8"><path d="M0 0v8l6-4z"/></svg></button>
        <button class="nav" aria-label="最后一页"><svg width="11" height="8"><path d="M0 0v8l5-4zM6 0v8l5-4z"/></svg></button>
        <button class="add" aria-label="新页面">+</button>
        <button>爆炸图</button><button>前壳</button><button class="wide">A+B密封圈</button>
        <button class="active" aria-current="page">五金螺纹盖垫</button>
        <button class="last">PCB板框图</button>
      </nav>`;
  }
}
customElements.define('sheet-tabs', SheetTabs);

class StatusBar extends HTMLElement {
  connectedCallback() {
    this.attachShadow({ mode: 'open' }).innerHTML = `
      <style>
        :host { display: flex; align-items: flex-start; justify-content: space-between; height: 30px; background: #fff; border-top: 1px solid #9cc; padding: 0 49px 0 6px; overflow: hidden; flex: none; }
        .views { display: flex; padding-top: 8px; height: 24px; }
        button { display: flex; align-items: center; justify-content: center; padding: 0; border: 0; background: none; width: 26px; height: 22px; box-sizing: border-box; }
        .on { width: 22px; background: #ccc; border: 1px solid #99c; margin-right: 2px; }
        hr { width: 1px; height: 24px; border: 0; margin: 0 0 0 7px; background: #ccc; }
        .ime { display: flex; align-items: flex-start; padding-top: 12px; }
        .ime .bar { display: flex; gap: 1px; height: 24px; margin: 3px 0 0 -9px; padding: 0 1px 0 10px; border: 1px solid #9cc; font: bold 14px/18px "Noto Sans CJK SC", sans-serif; color: #36c; }
        .bar button { width: 21px; }
        .bar .cn { font: inherit; color: inherit; }
      </style>
      <div class="views">
        <button class="on" aria-label="模型树"><creo-icon name="tree"></creo-icon></button>
        <button aria-label="浏览器"><creo-icon name="globe"></creo-icon></button>
        <button aria-label="全屏"><creo-icon name="panel"></creo-icon></button>
        <hr>
      </div>
      <div class="ime">
        <creo-icon name="sogou"></creo-icon>
        <div class="bar">
          <button class="cn">中</button>
          <button aria-label="标点"><creo-icon name="dots"></creo-icon></button>
          <button aria-label="表情"><creo-icon name="smile"></creo-icon></button>
          <button aria-label="语音"><creo-icon name="mic"></creo-icon></button>
          <button aria-label="键盘"><creo-icon name="keyboard"></creo-icon></button>
          <button aria-label="账户"><creo-icon name="person"></creo-icon></button>
          <button aria-label="皮肤"><creo-icon name="shirt"></creo-icon></button>
          <button aria-label="工具箱"><creo-icon name="apps"></creo-icon></button>
        </div>
      </div>`;
  }
}
customElements.define('status-bar', StatusBar);

class CreoApp extends HTMLElement {
  connectedCallback() {
    this.attachShadow({ mode: 'open' }).innerHTML = `
      <style>
        :host { display: flex; flex-direction: column; height: 100vh; padding-left: 4px; box-sizing: border-box; }
        main { display: flex; flex: 1; min-height: 0; }
        .work { display: flex; flex-direction: column; flex: 1; min-width: 0; }
      </style>
      <creo-title></creo-title>
      <ribbon-tabs></ribbon-tabs>
      <ribbon-bar></ribbon-bar>
      <quick-bar></quick-bar>
      <main>
        <side-panel></side-panel>
        <div class="work">
          <drawing-canvas></drawing-canvas>
          <sheet-tabs></sheet-tabs>
        </div>
      </main>
      <status-bar></status-bar>`;
  }
}
customElements.define('creo-app', CreoApp);
</script>
</body>
</html>
